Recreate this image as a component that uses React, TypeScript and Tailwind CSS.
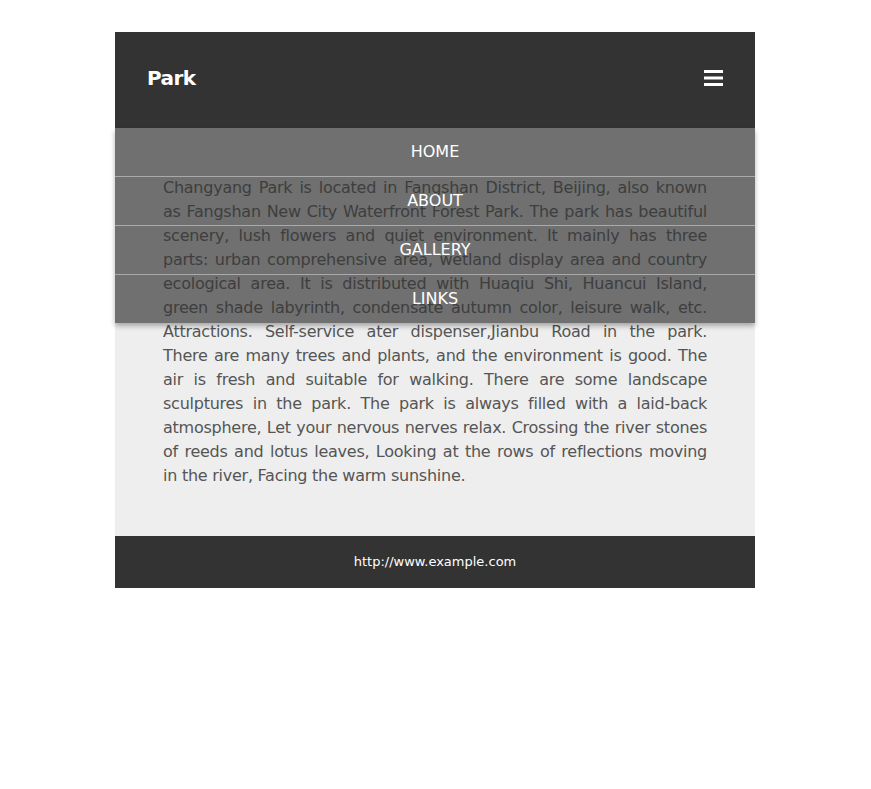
const navItems = ["HOME", "ABOUT", "GALLERY", "LINKS"];

// line breaks follow the reference exactly; each line but the last is justified edge to edge
const lines = [
  "Changyang Park is located in Fangshan District, Beijing, also known",
  "as Fangshan New City Waterfront Forest Park. The park has beautiful",
  "scenery, lush flowers and quiet environment. It mainly has three",
  "parts: urban comprehensive area, wetland display area and country",
  "ecological area. It is distributed with Huaqiu Shi, Huancui Island,",
  "green shade labyrinth, condensate autumn color, leisure walk, etc.",
  "Attractions. Self-service ater dispenser,Jianbu Road in the park.",
  "There are many trees and plants, and the environment is good. The",
  "air is fresh and suitable for walking. There are some landscape",
  "sculptures in the park. The park is always filled with a laid-back",
  "atmosphere, Let your nervous nerves relax. Crossing the river stones",
  "of reeds and lotus leaves, Looking at the rows of reflections moving",
  "in the river, Facing the warm sunshine.",
];

const HamburgerIcon = () => (
  <svg width="19" height="16" viewBox="0 0 19 16" fill="#fff">
    <rect x="0" y="0" width="19" height="3" />
    <rect x="0" y="6.5" width="19" height="3" />
    <rect x="0" y="13" width="19" height="3" />
  </svg>
);

export default function App() {
  return (
    <div className="min-h-screen bg-white pr-px pt-8 font-['DejaVu_Sans',sans-serif]">
      <div className="relative mx-auto w-[640px]">
        <header className="flex h-24 items-center justify-between bg-[#333] px-8 pb-1">
          <span className="text-[20px] font-bold tracking-[-0.6px] text-white">Park</span>
          <button className="flex items-center">
            <HamburgerIcon />
          </button>
        </header>

        <nav className="absolute left-0 right-0 top-24 z-10 bg-[rgba(51,51,51,0.68)] shadow-[0_3px_5px_rgba(0,0,0,0.3)]">
          {navItems.map((item, i) => (
            <a
              key={item}
              href="#"
              className={`block h-12 text-center text-[16px] leading-[48px] text-white ${
                i < navItems.length - 1 ? "box-content border-b border-[#aaa]" : ""
              }`}
            >
              {item}
            </a>
          ))}
        </nav>

        <main className="bg-[#eee] p-12">
          <p className="text-[16px] leading-6 tracking-[-0.25px] text-[#555]">
            {lines.map((line, i) => (
              <span
                key={i}
                className={`block whitespace-nowrap text-justify ${
                  i < lines.length - 1 ? "[text-align-last:justify]" : ""
                }`}
              >
                {line}
              </span>
            ))}
          </p>
        </main>

        <footer className="flex h-[52px] items-center justify-center bg-[#333] text-[13px] text-white">
          http://www.example.com
        </footer>
      </div>
    </div>
  );
}
